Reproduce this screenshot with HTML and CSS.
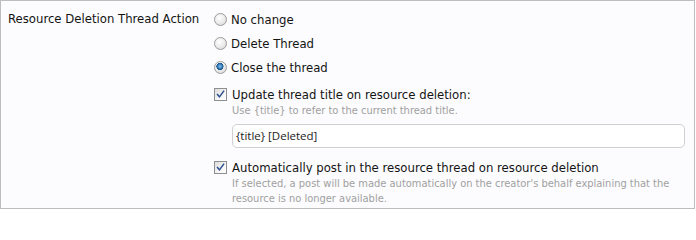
FILE: index.html
```html
<!DOCTYPE html>
<html>
<head>
<meta charset="utf-8">
<link rel="stylesheet" href="styles.css">
</head>
<body>
<div class="box">
  <div class="label">Resource Deletion Thread Action</div>
  <div class="controls">
    <ul class="radios">
      <li><span class="radio"></span>No change</li>
      <li><span class="radio"></span>Delete Thread</li>
      <li><span class="radio checked"></span>Close the thread</li>
    </ul>
    <div class="check-row">
      <span class="checkbox"><svg viewBox="0 0 13 13" width="13" height="13"><path d="M3 6.5 L5.3 9.3 L10.2 2.6" fill="none" stroke="#2d4f8f" stroke-width="1.8" stroke-linecap="square"/></svg></span>
      <span class="check-label">Update thread title on resource deletion:</span>
    </div>
    <div class="sub">
      <p class="hint">Use {title} to refer to the current thread title.</p>
      <div class="textbox">{title} [Deleted]</div>
    </div>
    <div class="check-row second">
      <span class="checkbox"><svg viewBox="0 0 13 13" width="13" height="13"><path d="M3 6.5 L5.3 9.3 L10.2 2.6" fill="none" stroke="#2d4f8f" stroke-width="1.8" stroke-linecap="square"/></svg></span>
      <span class="check-label">Automatically post in the resource thread on resource deletion</span>
    </div>
    <div class="sub">
      <p class="hint">If selected, a post will be made automatically on the creator's behalf explaining that the resource is no longer available.</p>
    </div>
  </div>
</div>
</body>
</html>
```
FILE: styles.css
```css
html, body {
  margin: 0;
  padding: 0;
  background: #ffffff;
}
body {
  font-family: "DejaVu Sans Condensed", "DejaVu Sans", Verdana, sans-serif;
  font-stretch: condensed;
  font-size: 13px;
  color: #141414;
}
.box {
  box-sizing: border-box;
  width: 695px;
  height: 209px;
  border: 1px solid #bdbdbd;
  background: #fcfcfe;
  padding: 6px 7px 0 7px;
  display: grid;
  grid-template-columns: 206px 1fr;
}
.label {
  line-height: 24px;
  white-space: nowrap;
}
.controls {
  min-width: 0;
}
.radios {
  list-style: none;
  margin: 0;
  padding: 0;
}
.radios li {
  display: flex;
  align-items: center;
  height: 24px;
}
.radio {
  box-sizing: border-box;
  width: 13px;
  height: 13px;
  border-radius: 50%;
  border: 1px solid #9d9d9d;
  background: radial-gradient(circle at 40% 35%, #ffffff 0%, #eeeeee 45%, #cfcfcf 100%);
  margin-right: 4px;
  flex: none;
}
.radio.checked {
  background:
    radial-gradient(circle at 45% 40%, #8fc4ec 0%, #3c86c4 22%, #174d7e 38%, rgba(23,77,126,0) 42%),
    radial-gradient(circle at 40% 35%, #ffffff 0%, #eeeeee 45%, #cfcfcf 100%);
}
.check-row {
  display: flex;
  align-items: center;
  height: 18px;
  margin-top: 6px;
}
.check-row.second {
  margin-top: 10px;
}
.checkbox {
  box-sizing: border-box;
  width: 13px;
  height: 13px;
  border: 1px solid #8e8f8f;
  background: linear-gradient(135deg, #dcdcdc 0%, #f6f6f6 60%, #ffffff 100%);
  margin-right: 5px;
  flex: none;
  display: flex;
  align-items: center;
  justify-content: center;
}
.checkbox svg {
  display: block;
  width: 11px;
  height: 11px;
}
.sub {
  padding-left: 18px;
}
.hint {
  margin: 0;
  font-size: 11px;
  line-height: 15px;
  color: #a0a0a0;
}
.textbox {
  box-sizing: border-box;
  margin-top: 6px;
  width: 453px;
  height: 24px;
  border: 1px solid #d0d0d0;
  border-radius: 5px;
  background: #ffffff;
  padding: 0 3px;
  line-height: 22px;
  font-family: "Open Sans", "DejaVu Sans", sans-serif;
  font-stretch: normal;
  font-size: 11.5px;
  color: #222;
}
```
